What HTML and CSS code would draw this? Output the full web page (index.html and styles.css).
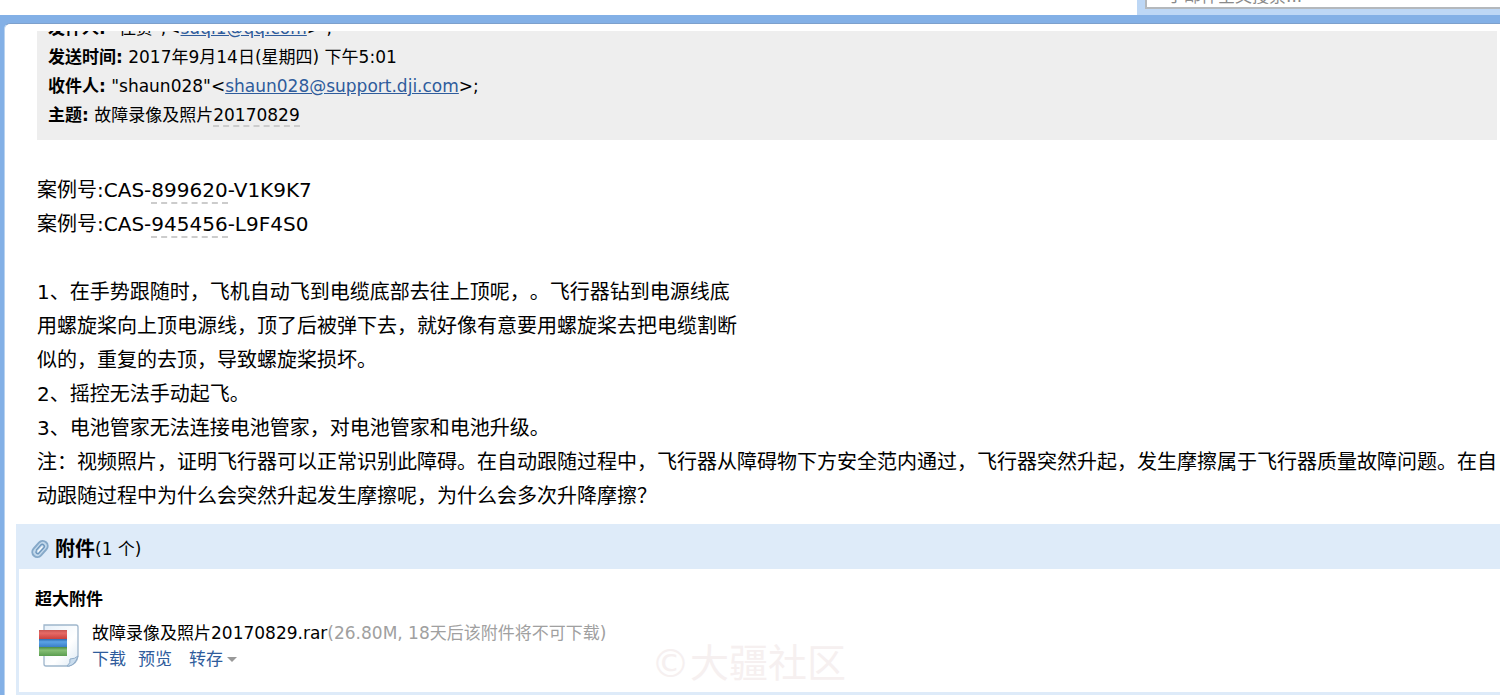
FILE: index.html
```
<!DOCTYPE html>
<html lang="zh-CN">
<head>
    <meta charset="UTF-8">
    <meta name="viewport" content="width=device-width, initial-scale=1.0">
    <title>故障录像及照片20170829</title>
    <link rel="stylesheet" href="styles.css">
</head>
<body>
    <header class="topbar">
        <div class="search">
            <input type="text" class="search-input" aria-label="搜索" placeholder="于邮件全文搜索...">
        </div>
    </header>

    <main class="frame">
        <div class="reader">
            <section class="mail-info">
                <div><b>发件人:</b> "佳贾",&lt;<a href="#">suqi1@qq.com</a>&gt; ;</div>
                <div><b>发送时间:</b> 2017年9月14日(星期四) 下午5:01</div>
                <div><b>收件人:</b> "shaun028"&lt;<a href="#">shaun028@support.dji.com</a>&gt;;</div>
                <div><b>主题:</b> 故障录像及照片<span class="num">20170829</span></div>
            </section>

            <article class="mail-body">
                <p>案例号:CAS-<span class="num">899620</span>-V1K9K7</p>
                <p>案例号:CAS-<span class="num">945456</span>-L9F4S0</p>
                <br>
                <p>1、在手势跟随时，飞机自动飞到电缆底部去往上顶呢，。飞行器钻到电源线底<br>用螺旋桨向上顶电源线，顶了后被弹下去，就好像有意要用螺旋桨去把电缆割断<br>似的，重复的去顶，导致螺旋桨损坏。</p>
                <p>2、摇控无法手动起飞。</p>
                <p>3、电池管家无法连接电池管家，对电池管家和电池升级。</p>
                <p>注：视频照片，证明飞行器可以正常识别此障碍。在自动跟随过程中，飞行器从障碍物下方安全范内通过，飞行器突然升起，发生摩擦属于飞行器质量故障问题。在自动跟随过程中为什么会突然升起发生摩擦呢，为什么会多次升降摩擦？</p>
            </article>
        </div>

        <section class="attach">
            <div class="attach-head">
                <svg class="clip" viewBox="0 0 20 20" fill="none" stroke-linecap="round">
                    <g transform="rotate(42 10 10)">
                        <rect x="5" y="1" width="10" height="18" rx="5" fill="#c3d9ec" stroke="#86a9c9" stroke-width="2"/>
                        <path d="M8 13V6.500a2 2 0 0 1 4 0V14a1.800 1.800 0 0 1-3.500 0" stroke="#6f97bd" stroke-width="1.400"/>
                        <path d="M10.200 7v6" stroke="#fff" stroke-width="1"/>
                    </g>
                </svg>
                <h2>附件</h2><span>(1 个)</span>
            </div>
            <div class="attach-body">
                <h3>超大附件</h3>
                <div class="file">
                    <svg class="file-icon" viewBox="0 0 42 46">
                        <defs>
                            <linearGradient id="paper" x1="0" y1="0" x2="1" y2="1">
                                <stop offset="0" stop-color="#e6f0f9"/>
                                <stop offset="0.600" stop-color="#fff"/>
                                <stop offset="1" stop-color="#dbe8f3"/>
                            </linearGradient>
                            <linearGradient id="red" x1="0" y1="0" x2="0" y2="1">
                                <stop offset="0" stop-color="#c85450"/>
                                <stop offset="0.350" stop-color="#e66a66"/>
                                <stop offset="1" stop-color="#c9413e"/>
                            </linearGradient>
                            <linearGradient id="blue" x1="0" y1="0" x2="0" y2="1">
                                <stop offset="0" stop-color="#2c69b0"/>
                                <stop offset="0.350" stop-color="#5ba3e6"/>
                                <stop offset="1" stop-color="#3a7ec8"/>
                            </linearGradient>
                            <linearGradient id="green" x1="0" y1="0" x2="0" y2="1">
                                <stop offset="0" stop-color="#4a8a42"/>
                                <stop offset="0.350" stop-color="#86bf76"/>
                                <stop offset="1" stop-color="#5a9d50"/>
                            </linearGradient>
                        </defs>
                        <path d="M6 2h32q2 0 2 2v29q-1 8-9 10H8q-2 0-2-2z" fill="url(#paper)" stroke="#9fb6cc" stroke-width="1.300"/>
                        <path d="M40 33q-3 3-8 3 1 4-3 7h2q6-1 9-10z" fill="#c9dced" stroke="#8facc9"/>
                        <rect x="1" y="7" width="28" height="9" fill="url(#red)"/>
                        <rect x="1" y="16" width="28" height="8" fill="url(#blue)"/>
                        <rect x="1" y="24" width="28" height="9" fill="url(#green)"/>
                    </svg>
                    <div>
                        <div class="file-name">故障录像及照片20170829.rar<span>(26.80M, 18天后该附件将不可下载)</span></div>
                        <div class="file-links">
                            <a href="#">下载</a>
                            <a href="#">预览</a>
                            <a href="#" class="more">转存</a>
                        </div>
                    </div>
                </div>
            </div>
        </section>
        <div class="watermark">©大疆社区</div>
    </main>
</body>
</html>
```

FILE: styles.css
```
* {
    box-sizing: border-box;
}

body {
    margin: 0;
    height: 100vh;
    overflow: hidden;
    display: flex;
    flex-direction: column;
    background: #fff;
    color: #000;
    font-family: "DejaVu Sans", "Noto Sans CJK SC", sans-serif;
    font-size: 17px;
    line-height: 29px;
    text-spacing-trim: space-all;
}

h2, h3, p {
    margin: 0;
}

a {
    color: #2f5c9c;
}

/* top search strip */
.topbar {
    height: 15px;
    flex: none;
    display: flex;
    justify-content: flex-end;
    align-items: flex-end;
}

.search {
    width: 363px;
    padding: 0 0 6px 8px;
    background: #bdd7f5;
}

.search-input {
    display: block;
    width: 100%;
    height: 26px;
    padding: 0 20px;
    border: 2px solid #b4b8bc;
    border-right: 0;
    background: #fff;
    font: inherit;
}

.search-input::placeholder {
    color: #8a8a8a;
}

/* blue frame round the message */
.frame {
    position: relative;
    flex: 1;
    display: flex;
    flex-direction: column;
    border-top: 8px solid #83b0e6;
    border-left: 4px solid #83b0e6;
    background: #83b0e6;
}

.reader {
    padding: 7px 0 11px 32px;
    border-top: 1px solid #7da0cc;
    border-left: 1px solid #b9d2ef;
    border-top-left-radius: 6px;
    background: #fff;
}

.mail-info {
    height: 109px;
    margin-right: 3px;
    padding: 0 11px 10px;
    display: flex;
    flex-direction: column;
    justify-content: flex-end;
    overflow: hidden;
    background: #eee;
}

.num {
    border-bottom: 2px dashed #ccc;
}

.mail-body {
    padding-top: 33px;
    font-size: 20px;
    line-height: 34px;
}

/* attachments */
.attach {
    flex: 1;
    padding-left: 11px;
    border-left: 1px solid #b9d2ef;
    background: #fff;
}

.attach-head {
    height: 45px;
    padding: 5px 0 0 14px;
    display: flex;
    align-items: center;
    background: #deebf9;
}

.attach-head h2 {
    font-size: 20px;
}

.clip {
    width: 20px;
    height: 20px;
    margin-right: 5px;
}

.attach-body {
    padding: 16px 0 20px 16px;
    border-left: 3px solid #deebf9;
    border-bottom: 3px solid #deebf9;
}

.attach-body h3 {
    font-size: 17px;
}

.file {
    display: flex;
    gap: 12px;
    padding-top: 6px;
    line-height: 26px;
}

.file-icon {
    width: 42px;
    height: 46px;
    margin: 3px 0 0 3px;
}

.file-name span {
    color: #a0a0a0;
}

.file-links {
    display: flex;
    gap: 12px;
}

.file-links a {
    text-decoration: none;
}

.more {
    display: flex;
    align-items: center;
    gap: 4px;
    margin-left: 5px;
}

.more::after {
    content: "";
    border: 5px solid transparent;
    border-top-color: #999;
    border-bottom: 0;
}

.watermark {
    position: absolute;
    left: 647px;
    bottom: 7px;
    color: #f6f0f0;
    font-size: 39px;
    line-height: 48px;
    pointer-events: none;
}
```
